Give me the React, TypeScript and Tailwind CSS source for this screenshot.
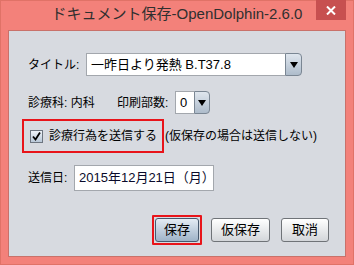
import React from 'react';

const font = { fontFamily: '"Liberation Sans", "Noto Sans CJK JP", sans-serif' };

function ArrowButton({ w }: { w: string }) {
  return (
    <div
      className={`${w} h-full flex items-center justify-center rounded-r-[4px] border border-[#7a8693] bg-gradient-to-b from-[#dfe6ee] to-[#aebccb]`}
    >
      <svg width="8" height="6" viewBox="0 0 8 6">
        <path d="M0 0 L8 0 L4 6 Z" fill="#000" />
      </svg>
    </div>
  );
}

function Combo({ text, width, arrowWidth }: { text: string; width: string; arrowWidth: string }) {
  return (
    <div className={`${width} h-[23px] flex`}>
      <div className="flex-1 h-full flex items-center pl-[4px] bg-white border border-[#a3a7ad] border-r-0 text-[13px] text-black whitespace-nowrap">
        {text}
      </div>
      <ArrowButton w={arrowWidth} />
    </div>
  );
}

function CheckBox() {
  return (
    <div className="w-[13px] h-[13px] shrink-0 border border-[#6d7580] bg-gradient-to-b from-[#eef3f9] to-[#b9c8d8] flex items-center justify-center">
      <svg width="11" height="11" viewBox="0 0 11 11">
        <path d="M2 5.5 L4.5 8.5 L9 1.5" stroke="#000" strokeWidth="1.8" fill="none" />
      </svg>
    </div>
  );
}

function Button({ label, width, primary }: { label: string; width: string; primary?: boolean }) {
  const tone = primary
    ? 'border-[#46596e] bg-gradient-to-b from-[#e4ecf4] to-[#9fb3c8]'
    : 'border-[#6f7378] bg-gradient-to-b from-[#ffffff] to-[#d3d6da]';
  return (
    <div
      className={`${width} h-[24px] flex items-center justify-center rounded-[3px] border ${tone} text-[13px] text-black`}
    >
      {label}
    </div>
  );
}

export default function App() {
  return (
    <div className="w-[354px] h-[265px] bg-[#f3817a] flex flex-col border border-[#e07267]" style={font}>
      {/* title bar */}
      <div className="relative h-[29px] flex items-center justify-center">
        <span className="text-[15px] text-[#2f2f2f] mt-[-2px]">ドキュメント保存-OpenDolphin-2.6.0</span>
        <div className="absolute right-[7px] top-[-1px] w-[30px] h-[20px] bg-[#c75050] flex items-center justify-center">
          <svg width="10" height="9" viewBox="0 0 10 9">
            <path d="M1 0.5 L9 8.5 M9 0.5 L1 8.5" stroke="#fff" strokeWidth="2" />
          </svg>
        </div>
      </div>

      {/* content */}
      <div className="mx-[7px] h-[227px] bg-[#d7dae0] border border-[#c9716a] flex flex-col text-[12px] text-black whitespace-nowrap">
        <div className="flex items-center mt-[22px] ml-[19px]">
          <span className="w-[58px]">タイトル:</span>
          <Combo text="一昨日より発熱 B.T37.8" width="w-[216px]" arrowWidth="w-[17px]" />
        </div>

        <div className="flex items-center mt-[15px] ml-[19px]">
          <span className="w-[89px]">診療科: 内科</span>
          <span className="w-[58px]">印刷部数:</span>
          <Combo text="0" width="w-[35px]" arrowWidth="w-[16px]" />
        </div>

        <div className="flex items-center mt-[5px] ml-[13px]">
          <div className="w-[142px] h-[34px] border-2 border-[#e8141a] flex items-center pl-[6px] gap-[6px]">
            <CheckBox />
            <span>診療行為を送信する</span>
          </div>
          <span className="ml-[1px]">(仮保存の場合は送信しない)</span>
        </div>

        <div className="flex items-center mt-[12px] ml-[19px]">
          <span className="w-[46px]">送信日:</span>
          <div className="w-[140px] h-[26px] bg-white border border-[#a3a7ad] flex items-center pl-[4px] text-[13px] text-[#0a0a2a]">
            2015年12月21日（月）
          </div>
        </div>

        <div className="flex justify-end items-center mt-[24px] mr-[16px]">
          <div className="p-[1px] border-2 border-[#e8141a] rounded-[1px]">
            <Button label="保存" width="w-[44px]" primary />
          </div>
          <div className="ml-[9px]">
            <Button label="仮保存" width="w-[59px]" />
          </div>
          <div className="ml-[11px]">
            <Button label="取消" width="w-[48px]" />
          </div>
        </div>
      </div>
    </div>
  );
}
